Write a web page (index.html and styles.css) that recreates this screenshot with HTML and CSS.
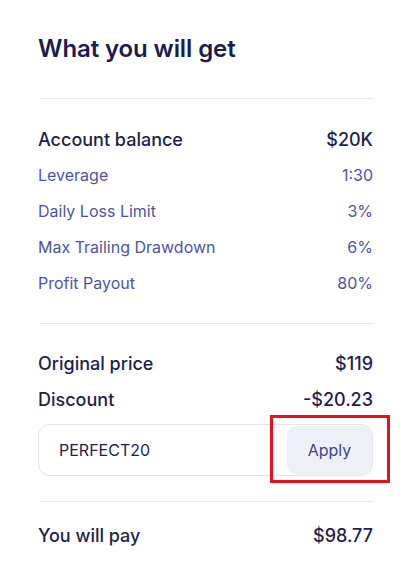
FILE: index.html
```html
<!DOCTYPE html>
<html>
<head>
<meta charset="utf-8">
<link rel="stylesheet" href="styles.css">
</head>
<body>
<div class="card">
  <h1 class="title">What you will get</h1>
  <hr class="divider first">
  <div class="row main"><span>Account balance</span><span>$20K</span></div>
  <div class="row sub"><span>Leverage</span><span>1:30</span></div>
  <div class="row sub"><span>Daily Loss Limit</span><span>3%</span></div>
  <div class="row sub"><span>Max Trailing Drawdown</span><span>6%</span></div>
  <div class="row sub"><span>Profit Payout</span><span>80%</span></div>
  <hr class="divider second">
  <div class="row main"><span>Original price</span><span>$119</span></div>
  <div class="row main"><span>Discount</span><span>-$20.23</span></div>
  <div class="coupon">
    <span class="code">PERFECT20</span>
    <button class="apply">Apply</button>
  </div>
  <hr class="divider third">
  <div class="row main"><span>You will pay</span><span>$98.77</span></div>
</div>
<div class="highlight"></div>
</body>
</html>
```
FILE: styles.css
```css
html, body {
  margin: 0;
  padding: 0;
  background: #ffffff;
}
body {
  font-family: Inter, "Noto Sans", sans-serif;
  color: #1e1f4b;
  position: relative;
  width: 404px;
  height: 577px;
  overflow: hidden;
}
.card {
  padding: 33px 31px 0 38px;
}
.title {
  margin: 0;
  font-size: 24px;
  line-height: 32px;
  font-weight: 600;
  color: #1b1c4c;
  letter-spacing: -0.1px;
}
.divider {
  border: 0;
  height: 1px;
  background: #e6e7ec;
  margin: 0 0 0 2px;
}
.divider.first { margin-top: 33px; margin-bottom: 22px; }
.divider.second { margin-top: 22px; margin-bottom: 21px; }
.divider.third { margin-top: 25px; margin-bottom: 15px; }
.row {
  display: flex;
  justify-content: space-between;
  align-items: center;
  height: 36px;
}
.row.main {
  font-size: 18px;
  font-weight: 500;
  color: #1e1f4b;
}
.row.sub {
  font-size: 16px;
  font-weight: 400;
  color: #4d55a3;
}
.coupon {
  margin-top: 7px;
  height: 50px;
  border: 1px solid #e2e4ec;
  border-radius: 12px;
  display: flex;
  align-items: center;
  justify-content: space-between;
  padding: 0 0 0 20px;
}
.code {
  font-size: 16px;
  color: #1e1f4b;
}
.apply {
  height: 49px;
  width: 85px;
  border: 0;
  border-radius: 10px;
  background: #eef0f8;
  font-family: Inter, "Noto Sans", sans-serif;
  font-size: 16px;
  color: #3c4488;
  padding: 0;
  margin-right: 0;
}
.highlight {
  position: absolute;
  left: 270px;
  top: 415px;
  width: 114px;
  height: 62px;
  border: 3px solid #e8101e;
}
```
